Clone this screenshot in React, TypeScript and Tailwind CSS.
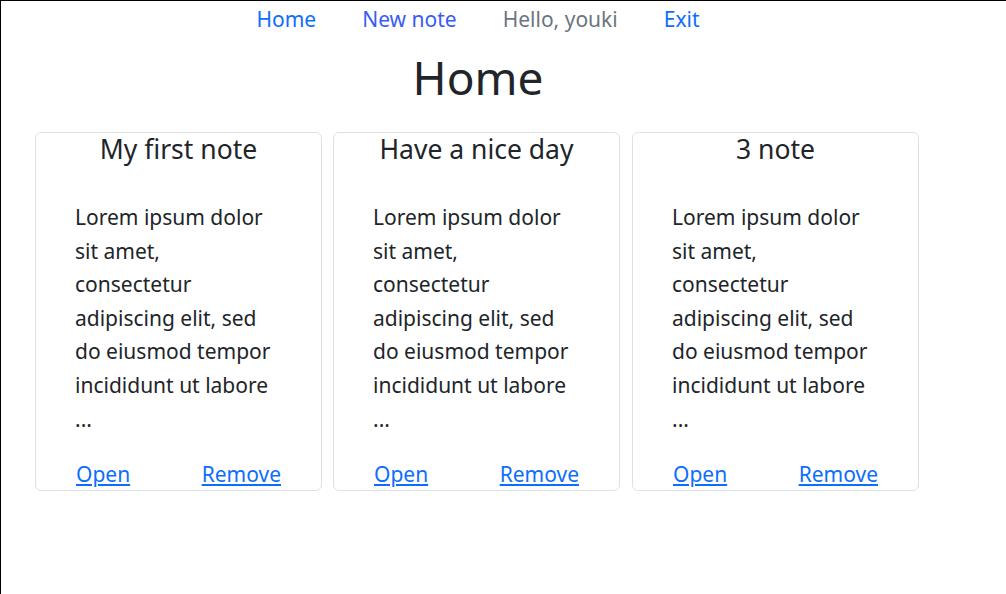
import React from "react";

const body =
  "Lorem ipsum dolor sit amet, consectetur adipiscing elit, sed do eiusmod tempor incididunt ut labore ...";

function Card({ title, extra = "" }: { title: string; extra?: string }) {
  return (
    <div className={`w-[287px] h-[359px] border border-[#dee2e6] rounded-[6px] flex flex-col ${extra}`}>
      <h5 className="text-center text-[26.5px] leading-[36px] -mt-[2px] text-[#212529]">{title}</h5>
      <p className="pl-[39px] pr-[40px] mt-[34px] text-[21px] leading-[33.6px] text-[#212529]">{body}</p>
      <div className="pl-[40px] pr-[40px] mt-auto mb-[1px] flex justify-between text-[21px] leading-[30px]">
        <a href="#" className="text-[#0d6efd] underline">Open</a>
        <a href="#" className="text-[#0d6efd] underline">Remove</a>
      </div>
    </div>
  );
}

export default function App() {
  return (
    <div className="w-[1006px] h-[594px] bg-white border-t border-l border-black overflow-hidden font-['Noto_Sans',sans-serif]">
      <div className="w-[954px] flex flex-col">
        <nav className="flex justify-center gap-[46px] text-[21px] leading-[36px] h-[36px]">
          <a href="#" className="text-[#0d6efd]">Home</a>
          <a href="#" className="text-[#3a5cf5]">New note</a>
          <span className="text-[#6c757d]">Hello, youki</span>
          <a href="#" className="text-[#0d6efd]">Exit</a>
        </nav>
        <h1 className="text-center text-[46px] leading-[80px] text-[#212529]">Home</h1>
        <div className="flex gap-[11px] pl-[34px] mt-[15px]">
          <Card title="My first note" />
          <Card title="Have a nice day" />
          <Card title="3 note" extra="ml-[1px]" />
        </div>
      </div>
    </div>
  );
}
